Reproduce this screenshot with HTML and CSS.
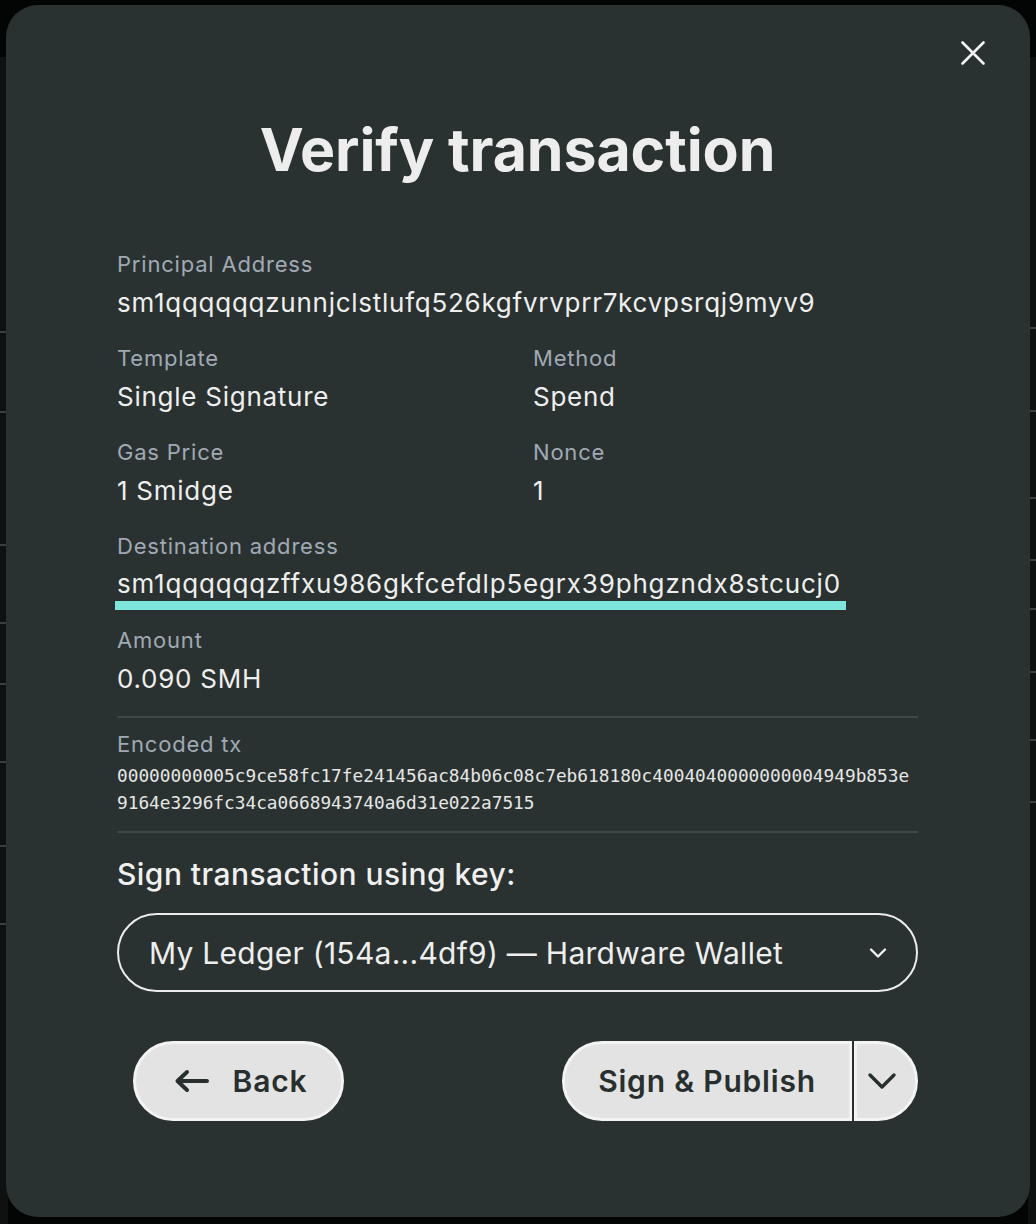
FILE: index.html
```html
<!DOCTYPE html>
<html lang="en">
<head>
<meta charset="utf-8">
<title>Verify transaction</title>
<link rel="stylesheet" href="styles.css">
</head>
<body>
<div class="page">
  <div class="strip strip-left"></div>
  <div class="strip strip-right"></div>
</div>
<div class="overlay">
  <div class="modal">
    <div class="modal-header">
      <button class="close" aria-label="Close">
        <svg width="24" height="24" viewBox="0 0 24 24"><path d="M1.5 1.5 L22.5 22.5 M22.5 1.5 L1.5 22.5" stroke="#f2f2f2" stroke-width="2.6" stroke-linecap="round" fill="none"/></svg>
      </button>
    </div>
    <h1 class="title">Verify transaction</h1>
    <div class="fields">
      <div class="field full">
        <div class="label">Principal Address</div>
        <div class="value">sm1qqqqqqzunnjclstlufq526kgfvrvprr7kcvpsrqj9myv9</div>
      </div>
      <div class="field">
        <div class="label">Template</div>
        <div class="value">Single Signature</div>
      </div>
      <div class="field">
        <div class="label">Method</div>
        <div class="value">Spend</div>
      </div>
      <div class="field">
        <div class="label">Gas Price</div>
        <div class="value">1 Smidge</div>
      </div>
      <div class="field">
        <div class="label">Nonce</div>
        <div class="value">1</div>
      </div>
      <div class="field full field-marked">
        <div class="label">Destination address</div>
        <div class="value value-marked"><span class="marked">sm1qqqqqqzffxu986gkfcefdlp5egrx39phgzndx8stcucj0</span></div>
      </div>
      <div class="field full">
        <div class="label">Amount</div>
        <div class="value">0.090 SMH</div>
      </div>
    </div>
    <div class="divider"></div>
    <div class="encoded">
      <div class="label">Encoded tx</div>
      <div class="mono">00000000005c9ce58fc17fe241456ac84b06c08c7eb618180c4004040000000004949b853e9164e3296fc34ca0668943740a6d31e022a7515</div>
    </div>
    <div class="divider divider-bottom"></div>
    <div class="sign-label">Sign transaction using key:</div>
    <div class="select">
      <span class="select-text">My Ledger (154a...4df9) — Hardware Wallet</span>
      <svg class="select-chevron" width="18" height="12" viewBox="0 0 18 12"><path d="M2 2.5 L9 9.5 L16 2.5" stroke="#f0f0f0" stroke-width="2.4" fill="none" stroke-linecap="round" stroke-linejoin="round"/></svg>
    </div>
    <div class="actions">
      <button class="btn btn-back">
        <svg width="36" height="24" viewBox="0 0 36 24"><path d="M33 12 H4 M13 3 L3.5 12 L13 21" stroke="#27302e" stroke-width="4" fill="none" stroke-linecap="round" stroke-linejoin="round"/></svg>
        <span>Back</span>
      </button>
      <div class="split">
        <button class="btn btn-main">Sign &amp; Publish</button>
        <button class="btn btn-more" aria-label="More">
          <svg width="30" height="18" viewBox="0 0 30 18"><path d="M3 3 L15 15 L27 3" stroke="#27302e" stroke-width="3.4" fill="none" stroke-linecap="round" stroke-linejoin="round"/></svg>
        </button>
      </div>
    </div>
  </div>
</div>
</body>
</html>
```
FILE: styles.css
```css
* { box-sizing: border-box; }
html, body {
  margin: 0;
  padding: 0;
  width: 1036px;
  height: 1224px;
  overflow: hidden;
  background: #030404;
  font-family: Inter, "Noto Sans", sans-serif;
}
.page {
  height: 1224px;
  padding-top: 57px;
  display: flex;
  justify-content: space-between;
}
.strip {
  width: 8px;
  height: 1167px;
  background-color: #0e1110;
}
.strip-left {
  background-image:
    linear-gradient(to bottom, transparent 274px, #3b403f 274px, #3b403f 276px, transparent 276px,
      transparent 354px, #3b403f 354px, #3b403f 356px, transparent 356px,
      transparent 487px, #3b403f 487px, #3b403f 489px, transparent 489px,
      transparent 565px, #3b403f 565px, #3b403f 567px, transparent 567px,
      transparent 626px, #3b403f 626px, #3b403f 628px, transparent 628px,
      transparent 704px, #3b403f 704px, #3b403f 706px, transparent 706px,
      transparent 788px, #3b403f 788px, #3b403f 790px, transparent 790px,
      transparent 866px, #3b403f 866px, #3b403f 868px, transparent 868px);
}
.strip-right {
  background-image:
    linear-gradient(to bottom, transparent 270px, #3b403f 270px, #3b403f 272px, transparent 272px,
      transparent 353px, #3b403f 353px, #3b403f 355px, transparent 355px,
      transparent 440px, #3b403f 440px, #3b403f 442px, transparent 442px,
      transparent 502px, #3b403f 502px, #3b403f 504px, transparent 504px,
      transparent 551px, #3b403f 551px, #3b403f 553px, transparent 553px,
      transparent 614px, #3b403f 614px, #3b403f 616px, transparent 616px,
      transparent 682px, #3b403f 682px, #3b403f 684px, transparent 684px,
      transparent 744px, #3b403f 744px, #3b403f 746px, transparent 746px);
}
.overlay {
  position: fixed;
  inset: 0;
  padding: 5px;
  display: flex;
  justify-content: center;
  align-items: flex-start;
}
.modal {
  width: 1024px;
  height: 1212px;
  background: #293230;
  border-radius: 32px;
  padding: 36px 112px 0 111px;
  display: flex;
  flex-direction: column;
  color: #eeeeee;
}
.modal-header {
  display: flex;
  justify-content: flex-end;
  margin-right: -67px;
  height: 24px;
}
.close {
  background: none;
  border: 0;
  padding: 0;
  width: 24px;
  height: 24px;
  display: block;
}
.close svg { display: block; }
.title {
  margin: 47px 0 0 0;
  text-align: center;
  font-size: 59px;
  line-height: 76px;
  font-weight: 700;
  color: #ededed;
  letter-spacing: -0.1px;
}
.fields {
  margin-top: 62px;
  display: grid;
  grid-template-columns: 385px 385px;
  column-gap: 31px;
  row-gap: 23px;
}
.field.full { grid-column: 1 / -1; }
.field-marked { margin-bottom: -7px; }
.label {
  font-size: 22px;
  line-height: 28px;
  color: #a0a9b4;
  letter-spacing: 0.8px;
}
.value {
  margin-top: 7px;
  font-size: 26px;
  line-height: 36px;
  color: #eeeeee;
  white-space: nowrap;
  letter-spacing: 0.74px;
}
.value-marked {
  line-height: 34px;
  letter-spacing: 0.82px;
}
.marked {
  display: inline-block;
  margin-left: -2px;
  padding: 0 5px 0 2px;
  border-bottom: 9px solid #7de6dc;
}
.divider {
  margin-top: 19px;
  height: 2px;
  background: #3e4745;
}
.encoded { margin-top: 12px; }
.mono {
  margin-top: 4px;
  font-family: "DejaVu Sans Mono", "Liberation Mono", monospace;
  font-size: 17.8px;
  line-height: 27px;
  color: #e6e6e6;
  word-break: break-all;
}
.divider-bottom { margin-top: 15px; }
.sign-label {
  margin-top: 21px;
  font-size: 30px;
  line-height: 40px;
  font-weight: 500;
  color: #f0f0f0;
  letter-spacing: 0.45px;
}
.select {
  margin-top: 19px;
  height: 79px;
  border: 2px solid #ececec;
  border-radius: 40px;
  display: flex;
  align-items: center;
  justify-content: space-between;
  padding: 0 29px 0 30px;
}
.select-text {
  font-size: 30px;
  color: #eeeeee;
  letter-spacing: 0.27px;
}
.select-chevron { display: block; }
.actions {
  margin-top: 49px;
  padding-left: 16px;
  display: flex;
  justify-content: space-between;
}
.btn {
  height: 80px;
  border: 3px solid #f3f3f3;
  background: #e3e3e3;
  color: #27302e;
  font-family: Inter, "Noto Sans", sans-serif;
  font-size: 30px;
  font-weight: 600;
  letter-spacing: 0.8px;
  display: flex;
  align-items: center;
  justify-content: center;
  padding: 0;
}
.btn-back {
  width: 211px;
  border-radius: 40px;
  gap: 23px;
  padding-left: 4px;
}
.btn-back svg { display: block; }
.split {
  display: flex;
  gap: 2px;
}
.btn-main {
  width: 290px;
  border-radius: 40px 0 0 40px;
  padding-left: 0;
  padding-right: 0;
}
.btn-more {
  width: 64px;
  border-radius: 0 40px 40px 0;
  padding-right: 8px;
}
.btn-more svg { display: block; }
```
